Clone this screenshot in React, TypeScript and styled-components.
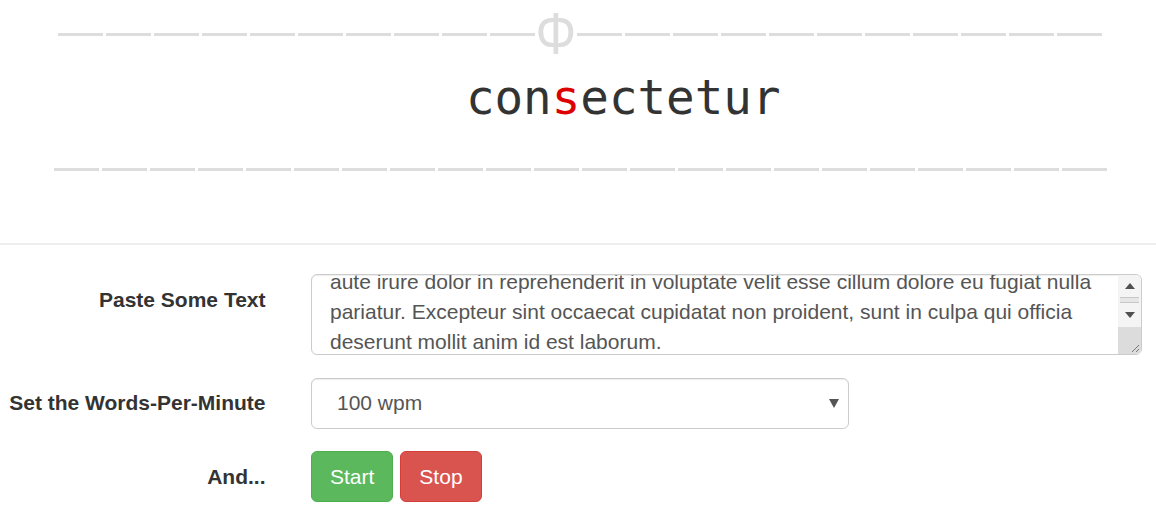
import React, { useEffect, useRef } from 'react';
import styled, { createGlobalStyle } from 'styled-components';

const LOREM =
  'Lorem ipsum dolor sit amet, consectetur adipiscing elit, sed do eiusmod tempor incididunt ut labore et dolore magna aliqua. Ut enim ad minim veniam, quis nostrud exercitation ullamco laboris nisi ut aliquip ex ea commodo consequat. Duis aute irure dolor in reprehenderit in voluptate velit esse cillum dolore eu fugiat nulla pariatur. Excepteur sint occaecat cupidatat non proident, sunt in culpa qui officia deserunt mollit anim id est laborum.';

const SPEEDS = [100, 150, 200, 250, 300, 350, 400, 500, 600];

const GlobalStyle = createGlobalStyle`
  * { box-sizing: border-box; }
  html, body { margin: 0; padding: 0; background: #fff; }
  body {
    font-family: 'Liberation Sans', Arial, Helvetica, sans-serif;
    font-size: 21px;
    line-height: 30px;
    color: #333;
  }
`;

const App = () => {
  const textRef = useRef<HTMLTextAreaElement>(null);

  // keep the end of the pasted text in view, like the original
  useEffect(() => {
    const el = textRef.current;
    if (el) el.scrollTop = el.scrollHeight - el.clientHeight - 12;
  }, []);

  return (
    <Page>
      <GlobalStyle />
      <Reader>
        <MarkerRow>
          <Dashes $count={10} />
          <Marker>
            <MarkerGlyph>Φ</MarkerGlyph>
          </Marker>
          <Dashes $count={11} />
        </MarkerRow>
        <WordRow>
          <Before>con</Before>
          <Focus>s</Focus>
          <After>ectetur</After>
        </WordRow>
        <BaseRow>
          <Dashes $count={22} />
        </BaseRow>
      </Reader>

      <Divider />

      <Form onSubmit={(e) => e.preventDefault()}>
        <FormRow>
          <Label htmlFor="source">Paste Some Text</Label>
          <Control>
            <TextBox>
              <TextArea
                id="source"
                ref={textRef}
                rows={2}
                defaultValue={LOREM}
              />
              <ScrollBar>
                <ScrollButton>
                  <Arrow $up />
                </ScrollButton>
                <Thumb />
                <ScrollButton $grow>
                  <Arrow />
                </ScrollButton>
                <Corner>
                  <svg width="10" height="10" viewBox="0 0 10 10">
                    <path d="M9 2 L2 9 M9 6 L6 9" stroke="#777" strokeWidth="1" />
                  </svg>
                </Corner>
              </ScrollBar>
            </TextBox>
          </Control>
        </FormRow>

        <FormRow>
          <Label htmlFor="wpm">Set the Words-Per-Minute</Label>
          <Control>
            <SelectBox>
              <Select id="wpm" defaultValue="100">
                {SPEEDS.map((s) => (
                  <option key={s} value={s}>
                    {s} wpm
                  </option>
                ))}
              </Select>
            </SelectBox>
          </Control>
        </FormRow>

        <FormRow>
          <Label as="span">And...</Label>
          <Control>
            <Buttons>
              <Button type="button" $variant="success">
                Start
              </Button>
              <Button type="button" $variant="danger">
                Stop
              </Button>
            </Buttons>
          </Control>
        </FormRow>
      </Form>
    </Page>
  );
};

export default App;

const Page = styled.div`
  width: 1156px;
  padding-top: 12px;
`;

const Reader = styled.section`
  display: flex;
  flex-direction: column;
`;

const Dashes = styled.div<{ $count: number }>`
  flex: none;
  width: ${({ $count }) => $count * 48 - 3}px;
  height: 3px;
  background: repeating-linear-gradient(
    to right,
    #dddddd 0 45px,
    transparent 45px 48px
  );
`;

const MarkerRow = styled.div`
  display: flex;
  align-items: center;
  justify-content: center;
  padding-left: 4px;
  height: 44px;
`;

const Marker = styled.span`
  flex: none;
  width: 42px;
  height: 44px;
  display: flex;
  justify-content: center;
  font-family: 'Liberation Sans', Arial, sans-serif;
  font-size: 60px;
  line-height: 44px;
  color: #dddddd;
`;

const MarkerGlyph = styled.span`
  display: inline-block;
  transform: scaleX(0.85);
`;

const WordRow = styled.div`
  display: grid;
  grid-template-columns: 1fr auto 1fr;
  margin-top: 14px;
  padding-right: 24px;
  font-family: 'DejaVu Sans Mono', 'Liberation Mono', monospace;
  font-size: 47.5px;
  line-height: 56px;
  color: #333;
  white-space: pre;
`;

const Before = styled.span`
  text-align: right;
`;

const Focus = styled.span`
  color: #dd0000;
`;

const After = styled.span`
  text-align: left;
`;

const BaseRow = styled.div`
  display: flex;
  justify-content: center;
  padding-left: 5px;
  margin-top: 42px;
`;

const Divider = styled.hr`
  margin: 72px 0 29px;
  border: 0;
  border-top: 2px solid #eeeeee;
`;

const Form = styled.form`
  display: flex;
  flex-direction: column;
  gap: 22.5px;
`;

const FormRow = styled.div`
  display: grid;
  grid-template-columns: 25% 1fr;
  align-items: start;
`;

const Label = styled.label`
  padding: 10.5px 23.5px 0 0;
  text-align: right;
  font-weight: bold;
  color: #333;
`;

const Control = styled.div`
  padding-left: 22px;
`;

const TextBox = styled.div`
  position: relative;
  margin-right: 14px;
`;

const TextArea = styled.textarea`
  display: block;
  width: 100%;
  height: 81px;
  padding: 9px 42px 9px 18px;
  border: 1px solid #cccccc;
  border-radius: 6px;
  box-shadow: inset 0 1px 1px rgba(0, 0, 0, 0.075);
  font: inherit;
  font-size: 21px;
  line-height: 30px;
  color: #555555;
  resize: none;
  overflow: hidden;
  outline: none;
`;

const ScrollBar = styled.div`
  position: absolute;
  top: 1px;
  right: 1px;
  bottom: 1px;
  width: 23px;
  display: flex;
  flex-direction: column;
  background: #f4f4f4;
  border-radius: 0 5px 5px 0;
  overflow: hidden;
  pointer-events: none;
`;

const ScrollButton = styled.div<{ $grow?: boolean }>`
  height: ${({ $grow }) => ($grow ? 24 : 22)}px;
  display: flex;
  align-items: center;
  justify-content: center;
`;

const Arrow = styled.span<{ $up?: boolean }>`
  width: 0;
  height: 0;
  border-left: 5px solid transparent;
  border-right: 5px solid transparent;
  ${({ $up }) =>
    $up ? 'border-bottom: 6px solid #505050;' : 'border-top: 6px solid #505050;'}
`;

const Thumb = styled.div`
  height: 6px;
  margin: 0 2px;
  border-top: 1px solid #c8c8c8;
  border-bottom: 1px solid #c8c8c8;
  background: #e6e6e6;
`;

const Corner = styled.div`
  flex: 1;
  display: flex;
  align-items: flex-end;
  justify-content: flex-end;
  background: #dcdcdc;
  padding: 0 1px 1px 0;
`;

const SelectBox = styled.div`
  position: relative;
  width: 538px;

  &::after {
    content: '';
    position: absolute;
    right: 10px;
    top: 21px;
    border-left: 5px solid transparent;
    border-right: 5px solid transparent;
    border-top: 9px solid #555555;
    pointer-events: none;
  }
`;

const Select = styled.select`
  display: block;
  width: 100%;
  height: 51px;
  padding: 0 30px 0 25px;
  appearance: none;
  border: 1px solid #cccccc;
  border-radius: 6px;
  background: #fff;
  box-shadow: inset 0 1px 1px rgba(0, 0, 0, 0.075);
  font: inherit;
  font-size: 21px;
  color: #555555;
  outline: none;
`;

const Buttons = styled.div`
  display: flex;
  gap: 7px;
`;

const Button = styled.button<{ $variant: 'success' | 'danger' }>`
  height: 51px;
  padding: 9px 18px;
  border-radius: 6px;
  border: 1px solid
    ${({ $variant }) => ($variant === 'success' ? '#4cae4c' : '#d43f3a')};
  background: ${({ $variant }) =>
    $variant === 'success' ? '#5cb85c' : '#d9534f'};
  color: #fff;
  font-family: inherit;
  font-size: 21px;
  line-height: 30px;
  cursor: pointer;
`;
